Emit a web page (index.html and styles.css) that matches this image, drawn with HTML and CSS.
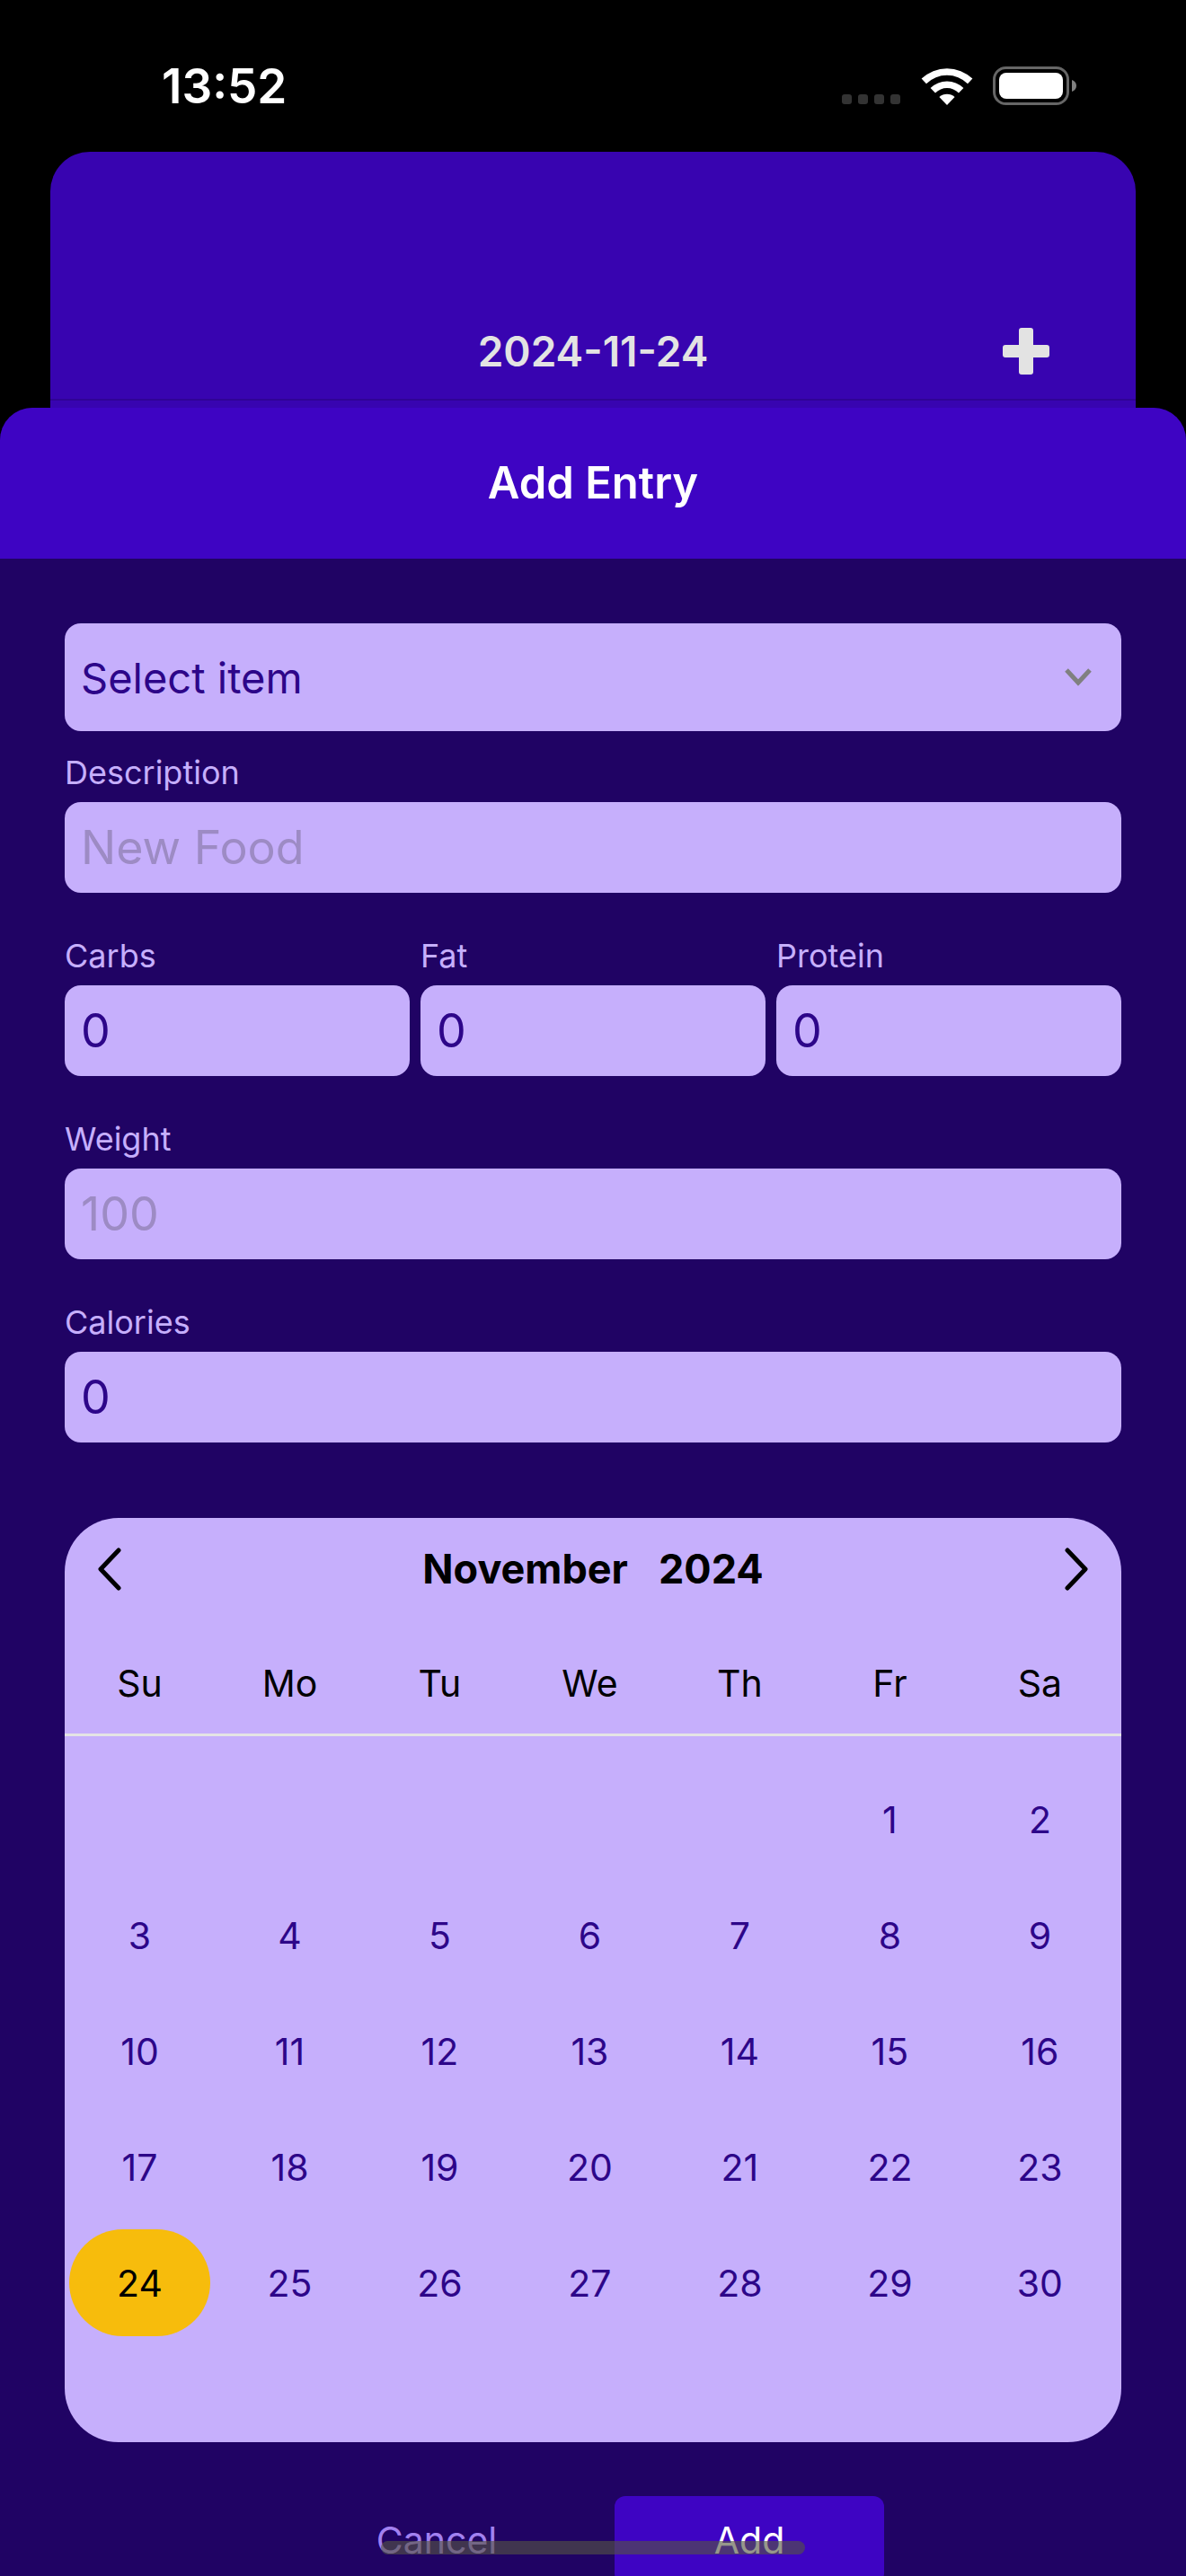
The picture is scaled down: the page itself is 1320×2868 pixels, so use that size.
FILE: index.html
```html
<!DOCTYPE html>
<html lang="en">
<head>
<meta charset="utf-8">
<meta name="viewport" content="width=device-width, initial-scale=1">
<title>Add Entry</title>
<link rel="stylesheet" href="styles.css">
</head>
<body>
<div class="screen">
  <div class="status-bar">
    <span class="status-time">13:52</span>
    <div class="status-icons">
      <svg class="icon-signal" viewBox="0 0 66 12" aria-hidden="true">
        <rect x="0" y="0" width="11" height="11" rx="3"/>
        <rect x="18" y="0" width="11" height="11" rx="3"/>
        <rect x="36" y="0" width="11" height="11" rx="3"/>
        <rect x="54" y="0" width="11" height="11" rx="3"/>
      </svg>
      <svg class="icon-wifi" viewBox="0 0 58 42" aria-hidden="true">
        <path d="M0.6 12.6 A41 41 0 0 1 57.4 12.6 L52 18.2 A33 33 0 0 0 6 18.2 Z"/>
        <path d="M10.6 23 A26.5 26.5 0 0 1 47.4 23 L42 28.4 A18.5 18.5 0 0 0 16 28.4 Z"/>
        <path d="M20.4 33 A13 13 0 0 1 37.6 33 L29 42 Z"/>
      </svg>
      <svg class="icon-battery" viewBox="0 0 94 44" aria-hidden="true">
        <rect class="battery-shell" x="1.5" y="1.5" width="82" height="40" rx="13"/>
        <rect class="battery-charge" x="7" y="7" width="71" height="29" rx="8"/>
        <path class="battery-cap" d="M88 15 C91 16 93 18.500 93 21.500 S91 27 88 28 Z"/>
      </svg>
    </div>
  </div>

  <div class="back-card">
    <div class="back-header">
      <h2 class="back-title">2024-11-24</h2>
      <button class="add-button" type="button" aria-label="Add">
        <svg viewBox="0 0 52 52" aria-hidden="true"><path d="M21 0h10q3 0 3 3v16h15q3 0 3 3v8q0 3-3 3H34v16q0 3-3 3H21q-3 0-3-3V33H3q-3 0-3-3v-8q0-3 3-3h15V3q0-3 3-3z"/></svg>
      </button>
    </div>
  </div>

  <main class="sheet">
    <header class="sheet-header"><h1 class="sheet-title">Add Entry</h1></header>

    <form class="entry-form">
      <div class="select-wrap">
        <select class="control select" aria-label="Item"><option>Select item</option></select>
        <svg class="select-arrow" viewBox="0 0 32 22" aria-hidden="true"><path d="M3 3l13 14L29 3"/></svg>
      </div>

      <div class="fields">
        <div class="field">
          <label for="description">Description</label>
          <input class="control" id="description" type="text" placeholder="New Food">
        </div>
        <div class="field-row">
          <div class="field">
            <label for="carbs">Carbs</label>
            <input class="control" id="carbs" type="text" inputmode="decimal" value="0">
          </div>
          <div class="field">
            <label for="fat">Fat</label>
            <input class="control" id="fat" type="text" inputmode="decimal" value="0">
          </div>
          <div class="field">
            <label for="protein">Protein</label>
            <input class="control" id="protein" type="text" inputmode="decimal" value="0">
          </div>
        </div>
        <div class="field">
          <label for="weight">Weight</label>
          <input class="control" id="weight" type="text" inputmode="decimal" placeholder="100">
        </div>
        <div class="field">
          <label for="calories">Calories</label>
          <input class="control" id="calories" type="text" inputmode="decimal" value="0">
        </div>
      </div>

      <section class="calendar" aria-label="Date">
        <div class="calendar-header">
          <button class="nav-button" type="button" aria-label="Previous month">
            <svg viewBox="0 0 28 48" aria-hidden="true"><path d="M24 3L4 24l20 21"/></svg>
          </button>
          <div class="calendar-title"><span>November</span><span>2024</span></div>
          <button class="nav-button" type="button" aria-label="Next month">
            <svg viewBox="0 0 28 48" aria-hidden="true"><path d="M4 3l20 21L4 45"/></svg>
          </button>
        </div>
        <div class="weekdays">
          <span>Su</span><span>Mo</span><span>Tu</span><span>We</span><span>Th</span><span>Fr</span><span>Sa</span>
        </div>
        <div class="days">
          <button type="button" class="day day-first">1</button>
          <button type="button" class="day">2</button>
          <button type="button" class="day">3</button>
          <button type="button" class="day">4</button>
          <button type="button" class="day">5</button>
          <button type="button" class="day">6</button>
          <button type="button" class="day">7</button>
          <button type="button" class="day">8</button>
          <button type="button" class="day">9</button>
          <button type="button" class="day">10</button>
          <button type="button" class="day">11</button>
          <button type="button" class="day">12</button>
          <button type="button" class="day">13</button>
          <button type="button" class="day">14</button>
          <button type="button" class="day">15</button>
          <button type="button" class="day">16</button>
          <button type="button" class="day">17</button>
          <button type="button" class="day">18</button>
          <button type="button" class="day">19</button>
          <button type="button" class="day">20</button>
          <button type="button" class="day">21</button>
          <button type="button" class="day">22</button>
          <button type="button" class="day">23</button>
          <button type="button" class="day day-selected" aria-pressed="true">24</button>
          <button type="button" class="day">25</button>
          <button type="button" class="day">26</button>
          <button type="button" class="day">27</button>
          <button type="button" class="day">28</button>
          <button type="button" class="day">29</button>
          <button type="button" class="day">30</button>
        </div>
      </section>

      <div class="actions">
        <button class="action action-flat" type="button">Cancel</button>
        <button class="action action-solid" type="submit">Add</button>
      </div>
    </form>
  </main>
  <div class="home-indicator"></div>
</div>
</body>
</html>
```

FILE: styles.css
```css
:root {
  --primary-100: #c6affc;
  --primary-200: #a281f0;
  --primary-500: #3e04c3;
  --primary-700: #2d0689;
  --primary-800: #200364;
  --accent: #f7bc0c;
}

* {
  box-sizing: border-box;
}

body {
  margin: 0;
  background: #000;
  font-family: Inter, "Liberation Sans", sans-serif;
}

button,
input,
select {
  margin: 0;
  padding: 0;
  border: 0;
  background: none;
  font: inherit;
  color: inherit;
}

h1,
h2 {
  margin: 0;
}

svg {
  display: block;
}

.screen {
  position: relative;
  display: flex;
  flex-direction: column;
  height: 100vh;
  overflow: hidden;
}

/* Status bar */

.status-bar {
  flex: none;
  display: flex;
  justify-content: space-between;
  align-items: center;
  height: 169px;
  padding: 22px 121px 0 180px;
  color: #fff;
}

.status-time {
  font-size: 53px;
  line-height: 64px;
  font-weight: 600;
}

.status-icons {
  display: flex;
  align-items: center;
}

.icon-signal {
  width: 66px;
  height: 12px;
  margin: 30px 22px 0 0;
  fill: #333;
}

.icon-wifi {
  width: 58px;
  height: 42px;
  margin-right: 22px;
  fill: #fff;
}

.icon-battery {
  width: 94px;
  height: 44px;
}

.battery-shell {
  fill: none;
  stroke: #666;
  stroke-width: 3;
}

.battery-charge {
  fill: #fff;
}

.battery-cap {
  fill: #808080;
}

/* Screen behind the sheet */

.back-card {
  flex: none;
  margin: 0 56px;
  height: 285px;
  padding-top: 169px;
  border-radius: 44px 44px 0 0;
  background: #3804b0;
  color: #e3e3e3;
}

.back-header {
  display: grid;
  grid-template-columns: 1fr auto 1fr;
  align-items: center;
  height: 108px;
  padding: 0 96px;
  border-bottom: 2px solid #300396;
}

.back-title {
  grid-column: 2;
  font-size: 46px;
  line-height: 56px;
  font-weight: 600;
}

.add-button {
  justify-self: end;
  width: 52px;
}

.add-button svg {
  width: 52px;
  height: 52px;
  fill: #e3e3e3;
}

/* Sheet */

.sheet {
  flex: 1;
  min-height: 0;
  overflow: hidden;
  border-radius: 36px 36px 0 0;
  background: var(--primary-800);
}

.sheet-header {
  display: flex;
  justify-content: center;
  align-items: center;
  height: 168px;
  background: var(--primary-500);
  color: #fff;
}

.sheet-title {
  font-size: 49px;
  line-height: 60px;
  font-weight: 600;
}

.entry-form {
  padding: 72px;
}

.control {
  display: block;
  width: 100%;
  height: 101px;
  padding: 0 18px;
  border-radius: 18px;
  background: var(--primary-100);
  color: var(--primary-700);
  font-size: 52px;
}

.control::placeholder {
  color: #9d8bc4;
  opacity: 1;
}

.select-wrap {
  display: grid;
  align-items: center;
}

.select {
  grid-area: 1 / 1;
  height: 120px;
  appearance: none;
  font-size: 47px;
}

.select-arrow {
  grid-area: 1 / 1;
  justify-self: end;
  width: 32px;
  height: 22px;
  margin-right: 32px;
  pointer-events: none;
  fill: none;
  stroke: #808080;
  stroke-width: 5;
}

.fields {
  display: grid;
  gap: 48px;
  margin-top: 24px;
}

.field-row {
  display: grid;
  grid-template-columns: repeat(3, 1fr);
  gap: 12px;
}

.field label {
  display: block;
  height: 55px;
  color: var(--primary-100);
  font-size: 36px;
  line-height: 44px;
}

/* Calendar */

.calendar {
  margin-top: 84px;
  padding-bottom: 118px;
  border-radius: 60px;
  background: var(--primary-100);
}

.calendar-header {
  display: flex;
  justify-content: space-between;
  align-items: center;
  height: 114px;
  padding: 0 36px;
}

.nav-button svg {
  width: 28px;
  height: 48px;
  fill: none;
  stroke: #000;
  stroke-width: 5;
  stroke-linecap: round;
  stroke-linejoin: round;
}

.calendar-title {
  display: flex;
  gap: 34px;
  font-size: 45px;
  line-height: 54px;
  font-weight: 700;
}

.weekdays,
.days {
  display: grid;
  grid-template-columns: repeat(7, 14.2%);
  justify-items: center;
  font-size: 41px;
}

.weekdays {
  height: 129px;
  padding-top: 43px;
  border-bottom: 3px solid #e4e4e4;
  line-height: 54px;
}

.days {
  grid-auto-rows: 119px;
  row-gap: 10px;
  margin-top: 33px;
  color: var(--primary-700);
}

.day {
  width: 94%;
  height: 100%;
  border-radius: 60px;
}

.day-first {
  grid-column-start: 6;
}

.day-selected {
  background: var(--accent);
  color: #000;
}

/* Actions */

.actions {
  display: flex;
  justify-content: center;
  gap: 48px;
  margin-top: 60px;
}

.action {
  flex: 0 1 300px;
  height: 98px;
  border-radius: 12px;
  font-size: 41px;
}

.action-flat {
  color: var(--primary-200);
}

.action-solid {
  background: var(--primary-500);
  color: #fff;
}

.home-indicator {
  position: absolute;
  left: 50%;
  bottom: 24px;
  width: 472px;
  height: 15px;
  margin-left: -236px;
  border-radius: 8px;
  background: rgba(85, 85, 65, 0.61);
}
```
